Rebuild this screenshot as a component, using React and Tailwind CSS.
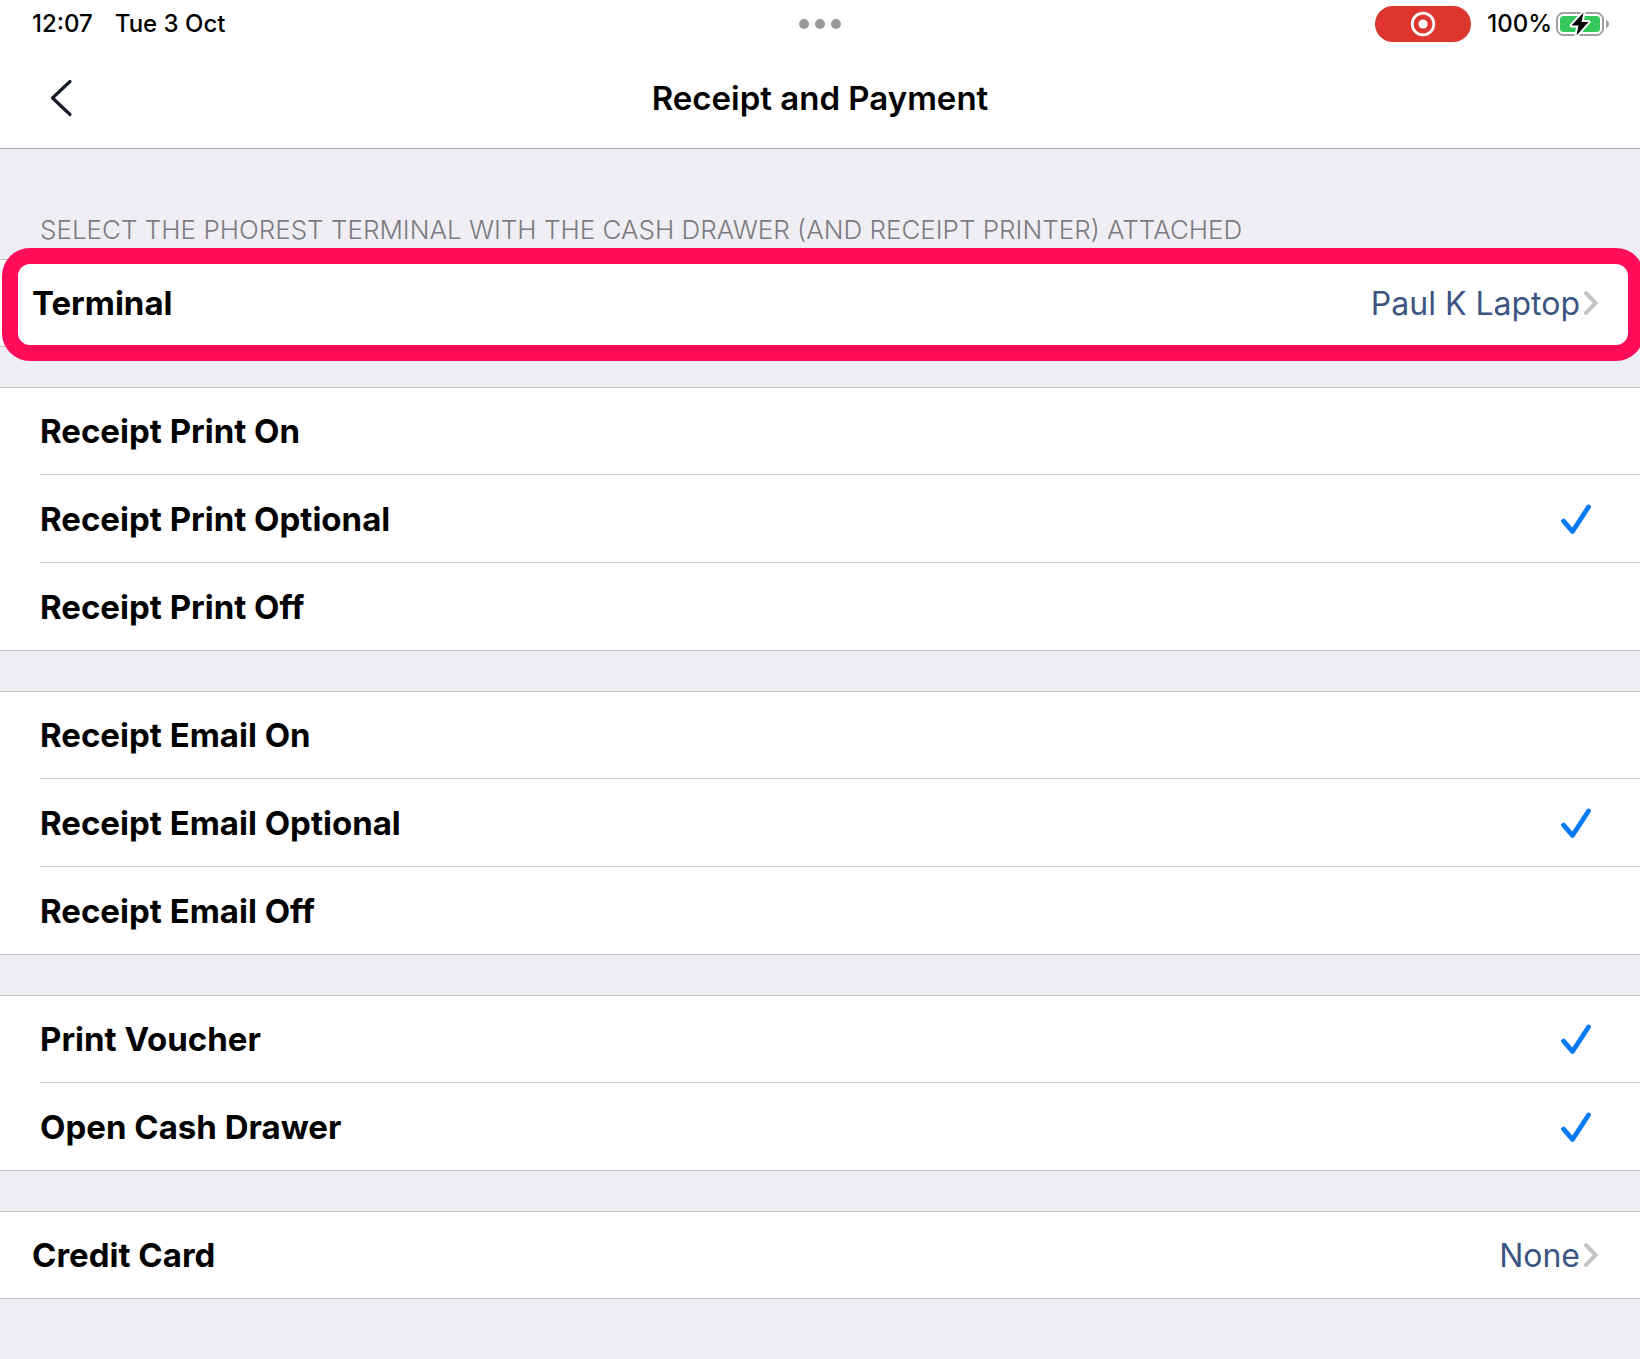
import React, { useState } from "react";
import clsx from "clsx";

const PRINT_OPTIONS = ["Receipt Print On", "Receipt Print Optional", "Receipt Print Off"];
const EMAIL_OPTIONS = ["Receipt Email On", "Receipt Email Optional", "Receipt Email Off"];

const CheckIcon = () => (
  <svg width="30" height="32" viewBox="0 0 30 32" fill="none" className="shrink-0" aria-hidden="true">
    <path d="M2.5 18 L11.5 28.5 L27.5 4" stroke="#067af8" strokeWidth="4.8" strokeLinecap="round" strokeLinejoin="round" />
  </svg>
);

const ChevronIcon = () => (
  <svg width="14" height="26" viewBox="0 0 14 26" fill="none" className="shrink-0" aria-hidden="true">
    <path d="M2 3 L11.5 13 L2 23" stroke="#c4c4c6" strokeWidth="4" strokeLinecap="round" strokeLinejoin="miter" />
  </svg>
);

const BatteryIcon = () => (
  <svg width="53" height="26" viewBox="0 0 53 26" fill="none" aria-hidden="true">
    <rect x="1" y="2" width="46" height="22" rx="6.5" stroke="#a0a0a0" strokeWidth="2" />
    <rect x="4" y="5" width="40" height="16" rx="3.5" fill="#34c759" />
    <path d="M50 9 Q53 10 53 13 Q53 16 50 17 Z" fill="#a0a0a0" />
    <path
      d="M27.5 1.5 L15.5 14.5 H22.5 L20.5 24.5 L32.5 11 H25.5 Z"
      fill="#000"
      stroke="#fff"
      strokeWidth="4"
      strokeLinejoin="round"
      paintOrder="stroke"
    />
  </svg>
);

const StatusBar = () => (
  <div className="grid h-12 grid-cols-3 items-center px-[31px] text-2xl font-medium">
    <div className="flex gap-[22px] pl-px">
      <span>12:07</span>
      <span>Tue 3 Oct</span>
    </div>
    <div className="flex justify-center gap-1.5">
      <span className="size-2.5 rounded-full bg-[#999999]"></span>
      <span className="size-2.5 rounded-full bg-[#999999]"></span>
      <span className="size-2.5 rounded-full bg-[#999999]"></span>
    </div>
    <div className="flex items-center justify-end">
      <span className="mr-4 flex h-9 w-24 items-center justify-center rounded-full bg-[#dc362e]">
        <svg width="26" height="26" viewBox="0 0 26 26" fill="none" aria-hidden="true">
          <circle cx="13" cy="13" r="10.8" stroke="#fff" strokeWidth="2.8" />
          <circle cx="13" cy="13" r="4.6" fill="#fff" />
        </svg>
      </span>
      <span className="mr-1">100%</span>
      <BatteryIcon />
    </div>
  </div>
);

// One 88px row, with the outer hairlines on the first and last row of a group
const Row = ({ children }) => (
  <li className="h-22 border-[#c6c6c8] bg-white first:border-t last:border-b">{children}</li>
);

const OptionRow = ({ type, name, label, checked, onChange, last }) => (
  <Row>
    <div className="h-full pl-10">
      <label
        className={clsx(
          "relative flex h-full cursor-pointer items-center justify-between border-[#c6c6c8] pr-[49px]",
          !last && "border-b"
        )}
      >
        <input type={type} name={name} checked={checked} onChange={onChange} className="sr-only" />
        <span className="pt-0.5 font-bold">{label}</span>
        {checked && <CheckIcon />}
      </label>
    </div>
  </Row>
);

const LinkRow = ({ label, value }) => (
  <Row>
    <button type="button" className="flex h-full w-full cursor-pointer items-center pl-8 pr-[42px]">
      <span className="pt-0.5 font-bold">{label}</span>
      <span className="ml-auto mr-1 pt-0.5 text-[32px] text-[#3d5583]">{value}</span>
      <ChevronIcon />
    </button>
  </Row>
);

const RadioGroup = ({ name, options, value, onChange }) => (
  <ul>
    {options.map((option, i) => (
      <OptionRow
        key={option}
        type="radio"
        name={name}
        label={option}
        checked={value === option}
        onChange={() => onChange(option)}
        last={i === options.length - 1}
      />
    ))}
  </ul>
);

const App = () => {
  const [print, setPrint] = useState("Receipt Print Optional");
  const [email, setEmail] = useState("Receipt Email Optional");
  const [voucher, setVoucher] = useState(true);
  const [drawer, setDrawer] = useState(true);

  return (
    <div className="min-h-screen overflow-x-hidden bg-[#efeef4] font-['Inter',sans-serif] text-black">
      <div className="border-b border-[#a5a5ab] bg-white">
        <StatusBar />
        {/* Navigation bar */}
        <header className="grid h-25 grid-cols-[1fr_auto_1fr] items-center px-12">
          <button type="button" aria-label="Back" className="w-fit cursor-pointer">
            <svg width="26" height="40" viewBox="0 0 26 40" fill="none" aria-hidden="true">
              <path d="M22 3.5 L4.5 20 L22 36.5" stroke="#171b28" strokeWidth="3.2" strokeLinecap="round" strokeLinejoin="round" />
            </svg>
          </button>
          <h1 className="pt-0.5 text-[33px] font-semibold">Receipt and Payment</h1>
        </header>
      </div>

      <main className="flex flex-col gap-10 text-[33px]">
        <section>
          <h2 className="flex h-[110px] items-end px-10 pb-[11px] text-[26px] leading-9 font-light text-[#7c7b81]">
            SELECT THE PHOREST TERMINAL WITH THE CASH DRAWER (AND RECEIPT PRINTER) ATTACHED
          </h2>
          <div className="relative">
            <ul>
              <LinkRow label="Terminal" value="Paul K Laptop" />
            </ul>
            {/* Highlight frame */}
            <div className="pointer-events-none absolute -top-[11px] -bottom-[14px] left-[2px] -right-[4px] rounded-[28px] border-16 border-[#ff0d5b]"></div>
          </div>
        </section>

        <RadioGroup name="print" options={PRINT_OPTIONS} value={print} onChange={setPrint} />
        <RadioGroup name="email" options={EMAIL_OPTIONS} value={email} onChange={setEmail} />

        <ul>
          <OptionRow type="checkbox" name="voucher" label="Print Voucher" checked={voucher} onChange={() => setVoucher(!voucher)} />
          <OptionRow type="checkbox" name="drawer" label="Open Cash Drawer" checked={drawer} onChange={() => setDrawer(!drawer)} last />
        </ul>

        <ul>
          <LinkRow label="Credit Card" value="None" />
        </ul>
      </main>
    </div>
  );
};

export default App;
